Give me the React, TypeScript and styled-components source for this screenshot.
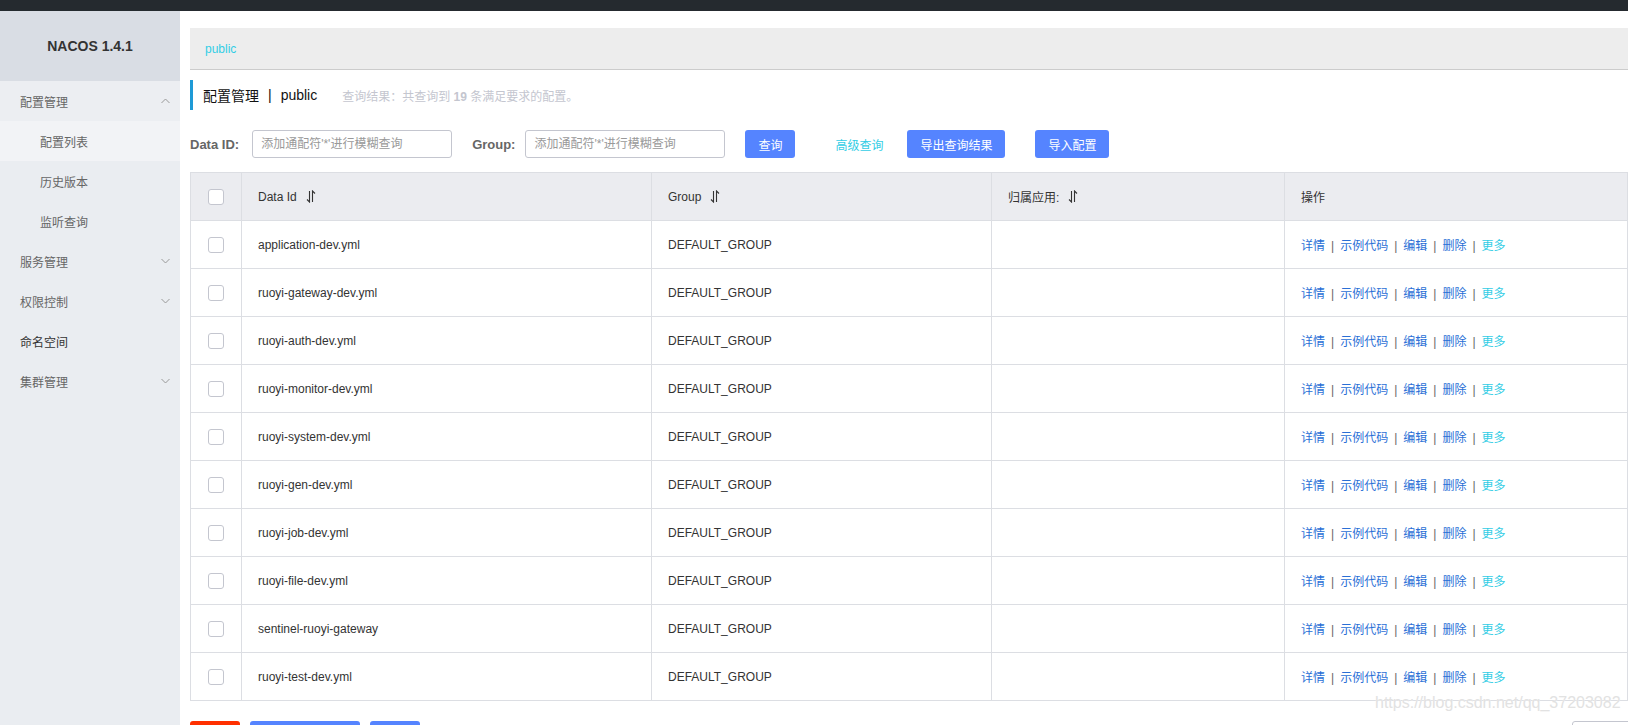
import React from "react";
import styled, { createGlobalStyle } from "styled-components";

const GlobalStyle = createGlobalStyle`
  html, body {
    margin: 0;
    padding: 0;
    overflow: hidden;
    background: #fff;
  }
  body {
    font-family: "Liberation Sans", "Noto Sans CJK SC", sans-serif;
    font-size: 12px;
    color: #333;
  }
  * {
    box-sizing: border-box;
  }
`;

const Page = styled.div`
  position: relative;
  width: 1628px;
  height: 725px;
  display: flex;
  flex-direction: column;
  overflow: hidden;
`;

const TopBar = styled.div`
  height: 11px;
  flex-shrink: 0;
  background: #252a2f;
`;

const Layout = styled.div`
  flex: 1;
  display: flex;
  min-height: 0;
`;

const Sidebar = styled.aside`
  width: 180px;
  flex-shrink: 0;
  background: #eaedf1;
  display: flex;
  flex-direction: column;
`;

const Logo = styled.div`
  height: 70px;
  background: #d9dde4;
  display: flex;
  align-items: center;
  justify-content: center;
  font-size: 14px;
  font-weight: 700;
  color: #333;
`;

const MenuItem = styled.div<{ $sub?: boolean; $active?: boolean; $open?: boolean; $dark?: boolean }>`
  height: 40px;
  display: flex;
  align-items: center;
  justify-content: space-between;
  padding: 0 10px 0 ${(p) => (p.$sub ? "40px" : "20px")};
  font-size: 12px;
  color: ${(p) => (p.$dark ? "#333" : "#666")};
  background: ${(p) => (p.$active ? "#f2f3f6" : p.$open ? "#eceef2" : "transparent")};
`;

const Main = styled.main`
  flex: 1;
  min-width: 0;
  padding: 17px 0 0 10px;
  display: flex;
  flex-direction: column;
`;

const Breadcrumb = styled.div`
  height: 42px;
  flex-shrink: 0;
  background: #ededed;
  border-bottom: 1px solid #ccc;
  padding-left: 15px;
  display: flex;
  align-items: center;
  color: #33cde5;
  font-size: 12px;
`;

const TitleRow = styled.div`
  margin-top: 10px;
  height: 30px;
  flex-shrink: 0;
  border-left: 3px solid #1e9ad6;
  padding-left: 10px;
  display: flex;
  align-items: center;
  font-size: 14px;
  color: #111;
`;

const TitleSep = styled.span`
  margin: 0 9px;
`;

const QueryResult = styled.span`
  margin-left: 25px;
  font-size: 12px;
  color: #c4c6cf;

  & > strong {
    font-weight: 700;
  }
`;

const SearchRow = styled.div`
  margin-top: 20px;
  height: 28px;
  flex-shrink: 0;
  display: flex;
  align-items: center;
`;

const Label = styled.label<{ $gap: number }>`
  font-size: 13px;
  font-weight: 700;
  color: #666;
  margin-right: ${(p) => p.$gap}px;
`;

const Input = styled.input`
  width: 200px;
  height: 28px;
  border: 1px solid #c4c6cf;
  border-radius: 3px;
  padding: 0 8px;
  font-family: inherit;
  font-size: 12px;
  color: #333;
  outline: none;
  margin-right: 20px;

  &::placeholder {
    color: #999;
  }
`;

const Button = styled.button<{ $w: number; $danger?: boolean }>`
  width: ${(p) => p.$w}px;
  height: 28px;
  flex-shrink: 0;
  border: none;
  border-radius: 3px;
  background: ${(p) => (p.$danger ? "#ff3000" : "#5584ff")};
  color: #fff;
  font-family: inherit;
  font-size: 12px;
  padding: 0;
  cursor: pointer;
`;

const TextLink = styled.a`
  color: #33cde5;
  font-size: 12px;
  margin: 0 24px 0 40px;
  cursor: pointer;
`;

const Table = styled.table`
  margin-top: 14px;
  width: 100%;
  border-collapse: collapse;
  table-layout: fixed;
  flex-shrink: 0;
`;

const Th = styled.th`
  height: 48px;
  padding: 0 16px;
  background: #ebecf0;
  border: 1px solid #dcdee3;
  text-align: left;
  font-weight: 400;
  font-size: 12px;
  color: #333;
`;

const Td = styled.td`
  height: 48px;
  padding: 0 16px;
  border: 1px solid #dcdee3;
  font-size: 12px;
  color: #333;
  white-space: nowrap;
`;

const CheckCell = styled.td`
  padding: 0;
  border: 1px solid #dcdee3;
  text-align: center;
  vertical-align: middle;
`;

const HeadCheckCell = styled(CheckCell).attrs({ as: "th" })`
  background: #ebecf0;
`;

const Checkbox = styled.span`
  display: inline-block;
  width: 16px;
  height: 16px;
  border: 1px solid #c4c6cf;
  border-radius: 3px;
  background: #fff;
  vertical-align: middle;
`;

const HeadLabel = styled.span`
  display: inline-flex;
  align-items: center;
  gap: 9px;
`;

const Action = styled.a<{ $more?: boolean }>`
  color: ${(p) => (p.$more ? "#33cde5" : "#2a6fd6")};
  cursor: pointer;
`;

const Sep = styled.span`
  color: #666;
  margin: 0 6px;
`;

const Footer = styled.div`
  margin-top: 20px;
  display: flex;
  gap: 10px;
  flex-shrink: 0;
`;

const PageSize = styled.div`
  margin-left: auto;
  margin-right: -20px;
  width: 76px;
  height: 28px;
  border: 1px solid #c4c6cf;
  border-radius: 3px;
  background: #fff;
`;

const Watermark = styled.div`
  position: absolute;
  left: 1375px;
  top: 694px;
  font-family: "Liberation Sans", sans-serif;
  font-size: 16px;
  color: #e2e2e2;
  text-shadow: 0 0 1px #fff;
  pointer-events: none;
`;

function Chevron({ up }: { up?: boolean }) {
  return (
    <svg width="9" height="6" viewBox="0 0 9 6" fill="none" stroke="#999" strokeWidth="1">
      {up ? <path d="M0.5 5 L4.5 1 L8.5 5" /> : <path d="M0.5 1 L4.5 5 L8.5 1" />}
    </svg>
  );
}

function SortIcon() {
  return (
    <svg width="10" height="13" viewBox="0 0 10 13" fill="none" stroke="#333" strokeWidth="1.1">
      <path d="M3.5 1 V12 L1 9.5" />
      <path d="M6.5 12 V1 L9 3.5" />
    </svg>
  );
}

const menu = [
  { label: "配置管理", open: true, chevron: "up" },
  { label: "配置列表", sub: true, active: true },
  { label: "历史版本", sub: true },
  { label: "监听查询", sub: true },
  { label: "服务管理", chevron: "down" },
  { label: "权限控制", chevron: "down" },
  { label: "命名空间", dark: true },
  { label: "集群管理", chevron: "down" },
];

const rows = [
  "application-dev.yml",
  "ruoyi-gateway-dev.yml",
  "ruoyi-auth-dev.yml",
  "ruoyi-monitor-dev.yml",
  "ruoyi-system-dev.yml",
  "ruoyi-gen-dev.yml",
  "ruoyi-job-dev.yml",
  "ruoyi-file-dev.yml",
  "sentinel-ruoyi-gateway",
  "ruoyi-test-dev.yml",
];

const actions = ["详情", "示例代码", "编辑", "删除"];

export default function App() {
  return (
    <Page>
      <GlobalStyle />
      <TopBar />
      <Layout>
        <Sidebar>
          <Logo>NACOS 1.4.1</Logo>
          {menu.map((m) => (
            <MenuItem key={m.label} $sub={m.sub} $active={m.active} $open={m.open} $dark={m.dark}>
              <span>{m.label}</span>
              {m.chevron && <Chevron up={m.chevron === "up"} />}
            </MenuItem>
          ))}
        </Sidebar>
        <Main>
          <Breadcrumb>public</Breadcrumb>
          <TitleRow>
            <span>配置管理</span>
            <TitleSep>|</TitleSep>
            <span>public</span>
            <QueryResult>
              查询结果：共查询到 <strong>19</strong> 条满足要求的配置。
            </QueryResult>
          </TitleRow>
          <SearchRow>
            <Label $gap={13}>Data ID:</Label>
            <Input placeholder="添加通配符'*'进行模糊查询" />
            <Label $gap={10}>Group:</Label>
            <Input placeholder="添加通配符'*'进行模糊查询" />
            <Button $w={50}>查询</Button>
            <TextLink>高级查询</TextLink>
            <Button $w={98}>导出查询结果</Button>
            <Button $w={74} style={{ marginLeft: 30 }}>
              导入配置
            </Button>
          </SearchRow>
          <Table>
            <colgroup>
              <col style={{ width: 51 }} />
              <col style={{ width: 410 }} />
              <col style={{ width: 340 }} />
              <col style={{ width: 293 }} />
              <col />
            </colgroup>
            <thead>
              <tr>
                <HeadCheckCell>
                  <Checkbox />
                </HeadCheckCell>
                <Th>
                  <HeadLabel>
                    Data Id <SortIcon />
                  </HeadLabel>
                </Th>
                <Th>
                  <HeadLabel>
                    Group <SortIcon />
                  </HeadLabel>
                </Th>
                <Th>
                  <HeadLabel>
                    归属应用: <SortIcon />
                  </HeadLabel>
                </Th>
                <Th>操作</Th>
              </tr>
            </thead>
            <tbody>
              {rows.map((r) => (
                <tr key={r}>
                  <CheckCell>
                    <Checkbox />
                  </CheckCell>
                  <Td>{r}</Td>
                  <Td>DEFAULT_GROUP</Td>
                  <Td />
                  <Td>
                    {actions.map((a) => (
                      <React.Fragment key={a}>
                        <Action>{a}</Action>
                        <Sep>|</Sep>
                      </React.Fragment>
                    ))}
                    <Action $more>更多</Action>
                  </Td>
                </tr>
              ))}
            </tbody>
          </Table>
          <Footer>
            <Button $w={50} $danger />
            <Button $w={110} />
            <Button $w={50} />
            <PageSize />
          </Footer>
        </Main>
      </Layout>
      <Watermark>https://blog.csdn.net/qq_37203082</Watermark>
    </Page>
  );
}
